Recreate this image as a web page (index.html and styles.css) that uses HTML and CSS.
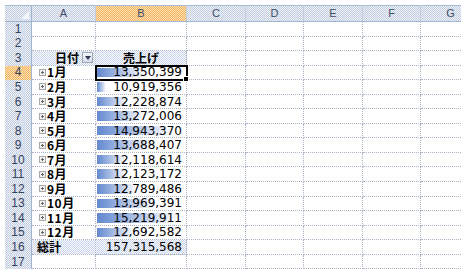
FILE: index.html
```html
<!DOCTYPE html>
<html>
<head>
  <meta charset="utf-8">
  <title>売上げ</title>
  <link rel="stylesheet" href="styles.css">
</head>
<body>
  <div class="sheet">
    <div class="corner"><svg width="8" height="8" viewBox="0 0 8 8"><polygon points="8,0 8,8 0,8" fill="#f3f5f9"/></svg></div>
    <div class="col">A</div>
    <div class="col active">B</div>
    <div class="col">C</div>
    <div class="col">D</div>
    <div class="col">E</div>
    <div class="col">F</div>
    <div class="col">G</div>

    <div class="row-num">1</div>
    <div class="cell"></div><div class="cell"></div><div class="cell"></div><div class="cell"></div><div class="cell"></div><div class="cell"></div><div class="cell"></div>

    <div class="row-num">2</div>
    <div class="cell"></div><div class="cell"></div><div class="cell"></div><div class="cell"></div><div class="cell"></div><div class="cell"></div><div class="cell"></div>

    <div class="row-num">3</div>
    <div class="cell pivot-head field">日付<span class="dropdown"><svg width="6" height="4" viewBox="0 0 6 4"><polygon points="0,0 6,0 3,4" fill="#2b3a55"/></svg></span></div>
    <div class="cell pivot-head centered">売上げ</div>
    <div class="cell"></div><div class="cell"></div><div class="cell"></div><div class="cell"></div><div class="cell"></div>

    <div class="row-num active">4</div>
    <div class="cell month"><span class="expand"></span>1月</div>
    <div class="cell value bar selected" style="--w:55.2%">13,350,399</div>
    <div class="cell"></div><div class="cell"></div><div class="cell"></div><div class="cell"></div><div class="cell"></div>

    <div class="row-num">5</div>
    <div class="cell month"><span class="expand"></span>2月</div>
    <div class="cell value bar" style="--w:10%">10,919,356</div>
    <div class="cell"></div><div class="cell"></div><div class="cell"></div><div class="cell"></div><div class="cell"></div>

    <div class="row-num">6</div>
    <div class="cell month"><span class="expand"></span>3月</div>
    <div class="cell value bar" style="--w:34.4%">12,228,874</div>
    <div class="cell"></div><div class="cell"></div><div class="cell"></div><div class="cell"></div><div class="cell"></div>

    <div class="row-num">7</div>
    <div class="cell month"><span class="expand"></span>4月</div>
    <div class="cell value bar" style="--w:53.8%">13,272,006</div>
    <div class="cell"></div><div class="cell"></div><div class="cell"></div><div class="cell"></div><div class="cell"></div>

    <div class="row-num">8</div>
    <div class="cell month"><span class="expand"></span>5月</div>
    <div class="cell value bar" style="--w:84.9%">14,943,370</div>
    <div class="cell"></div><div class="cell"></div><div class="cell"></div><div class="cell"></div><div class="cell"></div>

    <div class="row-num">9</div>
    <div class="cell month"><span class="expand"></span>6月</div>
    <div class="cell value bar" style="--w:61.5%">13,688,407</div>
    <div class="cell"></div><div class="cell"></div><div class="cell"></div><div class="cell"></div><div class="cell"></div>

    <div class="row-num">10</div>
    <div class="cell month"><span class="expand"></span>7月</div>
    <div class="cell value bar" style="--w:32.3%">12,118,614</div>
    <div class="cell"></div><div class="cell"></div><div class="cell"></div><div class="cell"></div><div class="cell"></div>

    <div class="row-num">11</div>
    <div class="cell month"><span class="expand"></span>8月</div>
    <div class="cell value bar" style="--w:32.4%">12,123,172</div>
    <div class="cell"></div><div class="cell"></div><div class="cell"></div><div class="cell"></div><div class="cell"></div>

    <div class="row-num">12</div>
    <div class="cell month"><span class="expand"></span>9月</div>
    <div class="cell value bar" style="--w:44.8%">12,789,486</div>
    <div class="cell"></div><div class="cell"></div><div class="cell"></div><div class="cell"></div><div class="cell"></div>

    <div class="row-num">13</div>
    <div class="cell month"><span class="expand"></span>10月</div>
    <div class="cell value bar" style="--w:66.7%">13,969,391</div>
    <div class="cell"></div><div class="cell"></div><div class="cell"></div><div class="cell"></div><div class="cell"></div>

    <div class="row-num">14</div>
    <div class="cell month"><span class="expand"></span>11月</div>
    <div class="cell value bar" style="--w:90%">15,219,911</div>
    <div class="cell"></div><div class="cell"></div><div class="cell"></div><div class="cell"></div><div class="cell"></div>

    <div class="row-num">15</div>
    <div class="cell month"><span class="expand"></span>12月</div>
    <div class="cell value bar" style="--w:43%">12,692,582</div>
    <div class="cell"></div><div class="cell"></div><div class="cell"></div><div class="cell"></div><div class="cell"></div>

    <div class="row-num">16</div>
    <div class="cell pivot-head total">総計</div>
    <div class="cell pivot-head value">157,315,568</div>
    <div class="cell"></div><div class="cell"></div><div class="cell"></div><div class="cell"></div><div class="cell"></div>

    <div class="row-num">17</div>
    <div class="cell"></div><div class="cell"></div><div class="cell"></div><div class="cell"></div><div class="cell"></div><div class="cell"></div><div class="cell"></div>
  </div>
</body>
</html>
```

FILE: styles.css
```css
body {
  margin: 0;
  padding: 5px 0 0 5px;
  background: #fff;
  overflow: hidden;
  font-family: "DejaVu Sans", "Noto Sans CJK JP", sans-serif;
}

.sheet {
  display: grid;
  grid-template-columns: 27px 64px 91px 59px 58px 59px 58px 60px;
  grid-template-rows: 17px repeat(17, 14.55px);
  width: 476px;
}

/* headers */
.corner,
.col,
.row-num {
  display: flex;
  align-items: center;
  justify-content: center;
  box-sizing: border-box;
  background: repeating-conic-gradient(#c3cde0 0 25%, #eef2f8 0 50%) 0 0 / 2px 2px;
  color: #3d4c68;
  font: 11px/13px "Liberation Sans", sans-serif;
}

.corner {
  justify-content: flex-end;
  align-items: flex-end;
  padding: 0 2px 2px 0;
  border-top: 1px solid #a9bcd6;
  border-right: 1px solid #9fb5d0;
  border-bottom: 1px solid #9fb5d0;
}

.col {
  border-top: 1px solid #a9bcd6;
  border-right: 1px solid #c2cddd;
  border-bottom: 1px solid #9fb5d0;
}

.row-num {
  font-size: 12px;
  color: #33425e;
  border-right: 1px solid #9fb5d0;
}

.active {
  background: repeating-conic-gradient(#f2b25e 0 25%, #fde2b5 0 50%) 0 0 / 2px 2px;
}

/* cells */
.cell {
  display: flex;
  align-items: center;
  box-sizing: border-box;
  border-right: 1px dotted #aab4c6;
  border-bottom: 1px dotted #aab4c6;
  font-size: 12px;
  line-height: 12px;
  color: #000;
  white-space: nowrap;
}

.pivot-head {
  background: repeating-conic-gradient(#c6d3ea 0 25%, #fff 0 50%) 0 0 / 2px 2px;
  font-weight: bold;
  font-family: "Noto Sans CJK JP", sans-serif;
}

.field {
  padding-left: 23px;
}

.centered {
  justify-content: center;
}

.dropdown {
  display: flex;
  align-items: center;
  justify-content: center;
  box-sizing: border-box;
  width: 11px;
  height: 11px;
  margin-left: auto;
  margin-right: 2px;
  border: 1px solid #9ea8ba;
  background: linear-gradient(#f7f9fc, #d6dde9);
}

.total {
  padding-left: 5px;
}

.month {
  padding-left: 7px;
  font-family: "Noto Sans CJK JP", sans-serif;
  font-weight: bold;
  letter-spacing: 0.5px;
}

.expand {
  width: 7px;
  height: 7px;
  box-sizing: border-box;
  margin-right: 1px;
  border: 1px solid #a8a8a8;
  background:
    linear-gradient(#666, #666) center / 3px 1px no-repeat,
    linear-gradient(#666, #666) center / 1px 3px no-repeat,
    #f2f2f2;
}

.value {
  justify-content: flex-end;
  padding-right: 4px;
  font-family: "DejaVu Sans", sans-serif;
  font-weight: normal;
}

.bar {
  background: linear-gradient(to right, #6288cf, #fff) 1px 2px / var(--w) calc(100% - 4px) no-repeat;
}

.selected {
  position: relative;
  z-index: 1;
  outline: 2px solid #000;
  outline-offset: -1px;
}

.selected::after {
  content: "";
  position: absolute;
  right: -3px;
  bottom: -3px;
  width: 4px;
  height: 4px;
  background: #000;
  border: 1px solid #fff;
}
```
